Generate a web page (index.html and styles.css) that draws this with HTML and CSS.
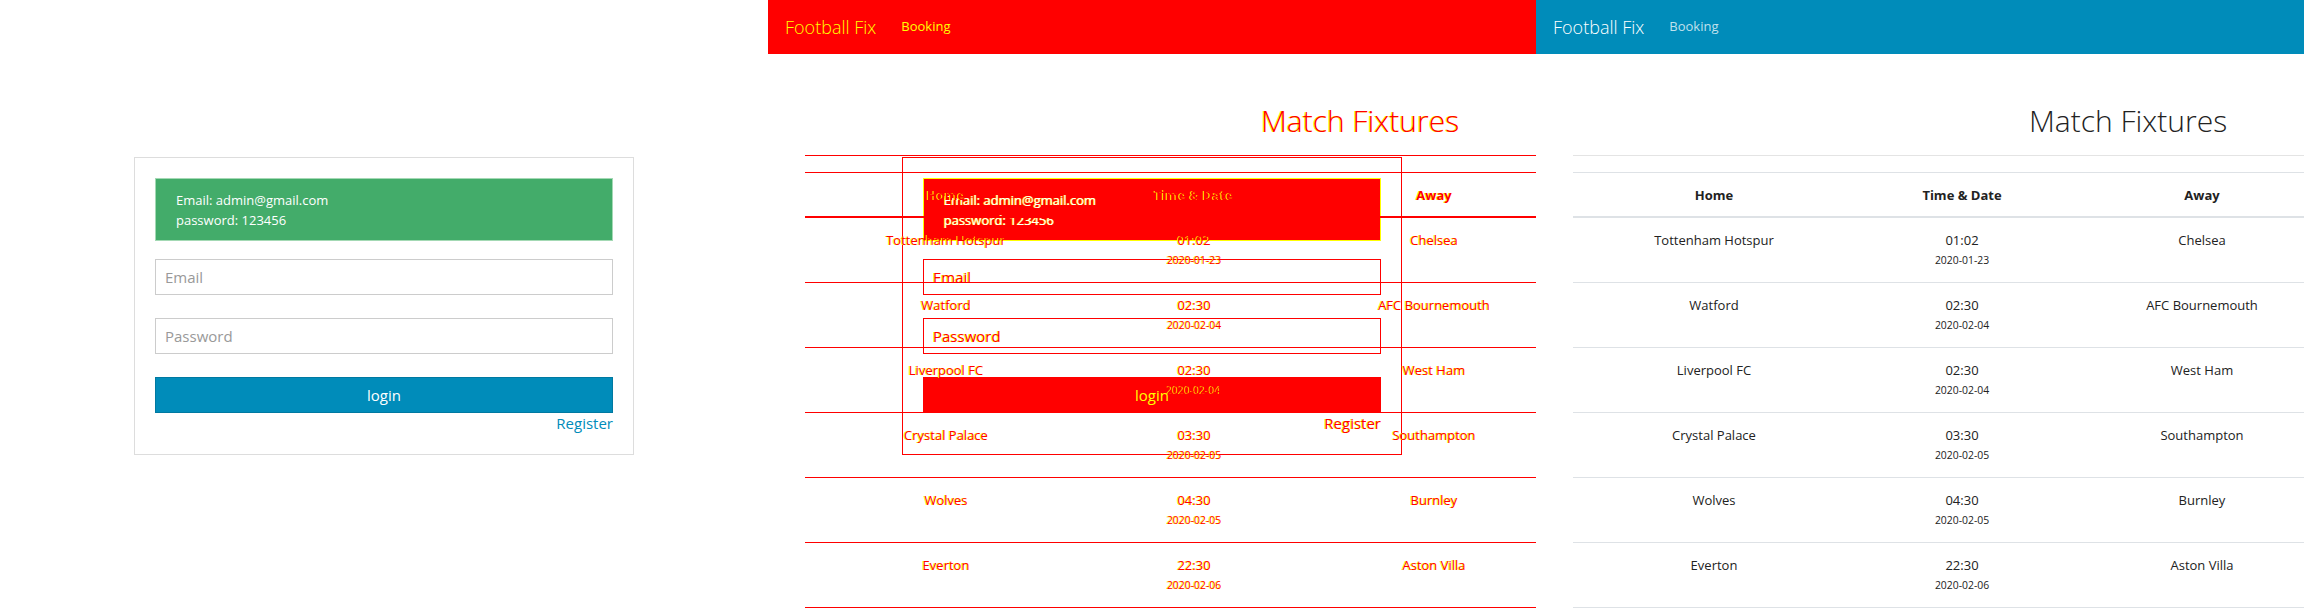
FILE: index.html
```html
<!DOCTYPE html>
<html lang="en">
<head>
<meta charset="utf-8">
<title>Football Fix</title>
<link rel="stylesheet" href="styles.css">
</head>
<body>
<div class="panels">

  <!-- Panel 1: login page -->
  <section class="panel">
    <div class="login-page">
      <form class="card">
        <div class="alert">Email: admin@gmail.com<br>password: 123456</div>
        <input class="field field-email" type="text" placeholder="Email">
        <input class="field field-pass" type="password" placeholder="Password">
        <button class="btn-login" type="button">login</button>
        <div class="register">Register</div>
      </form>
    </div>
  </section>

  <!-- Panel 2: difference overlay of both pages -->
  <section class="panel">
    <div class="layer diff">
      <div class="login-page">
        <form class="card">
          <div class="alert">Email: admin@gmail.com<br>password: 123456</div>
          <input class="field field-email" type="text" placeholder="Email">
          <input class="field field-pass" type="password" placeholder="Password">
          <button class="btn-login" type="button">login</button>
          <div class="register">Register</div>
        </form>
      </div>
    </div>
    <div class="layer diff">
      <nav class="navbar">
        <span class="brand">Football Fix</span>
        <span class="nav-link">Booking</span>
      </nav>
      <main class="container">
        <h1 class="title">Match Fixtures</h1>
        <hr class="rule">
        <table class="fixtures">
          <colgroup><col class="c-home"><col class="c-time"><col class="c-away"><col></colgroup>
          <thead><tr><th>Home</th><th>Time &amp; Date</th><th>Away</th><th></th></tr></thead>
          <tbody>
            <tr><td>Tottenham Hotspur</td><td>01:02<small class="date">2020-01-23</small></td><td>Chelsea</td><td></td></tr>
            <tr><td>Watford</td><td>02:30<small class="date">2020-02-04</small></td><td>AFC Bournemouth</td><td></td></tr>
            <tr><td>Liverpool FC</td><td>02:30<small class="date">2020-02-04</small></td><td>West Ham</td><td></td></tr>
            <tr><td>Crystal Palace</td><td>03:30<small class="date">2020-02-05</small></td><td>Southampton</td><td></td></tr>
            <tr><td>Wolves</td><td>04:30<small class="date">2020-02-05</small></td><td>Burnley</td><td></td></tr>
            <tr><td>Everton</td><td>22:30<small class="date">2020-02-06</small></td><td>Aston Villa</td><td></td></tr>
          </tbody>
        </table>
      </main>
    </div>
  </section>

  <!-- Panel 3: fixtures page -->
  <section class="panel">
    <nav class="navbar">
      <span class="brand">Football Fix</span>
      <span class="nav-link">Booking</span>
    </nav>
    <main class="container">
      <h1 class="title">Match Fixtures</h1>
      <hr class="rule">
      <table class="fixtures">
        <colgroup><col class="c-home"><col class="c-time"><col class="c-away"><col></colgroup>
        <thead><tr><th>Home</th><th>Time &amp; Date</th><th>Away</th><th></th></tr></thead>
        <tbody>
          <tr><td>Tottenham Hotspur</td><td>01:02<small class="date">2020-01-23</small></td><td>Chelsea</td><td></td></tr>
          <tr><td>Watford</td><td>02:30<small class="date">2020-02-04</small></td><td>AFC Bournemouth</td><td></td></tr>
          <tr><td>Liverpool FC</td><td>02:30<small class="date">2020-02-04</small></td><td>West Ham</td><td></td></tr>
          <tr><td>Crystal Palace</td><td>03:30<small class="date">2020-02-05</small></td><td>Southampton</td><td></td></tr>
          <tr><td>Wolves</td><td>04:30<small class="date">2020-02-05</small></td><td>Burnley</td><td></td></tr>
          <tr><td>Everton</td><td>22:30<small class="date">2020-02-06</small></td><td>Aston Villa</td><td></td></tr>
        </tbody>
      </table>
    </main>
  </section>

</div>
</body>
</html>
```

FILE: styles.css
```css
* { box-sizing: border-box; }

html, body { margin: 0; padding: 0; }

body {
  width: 2304px;
  height: 612px;
  overflow: hidden;
  background: #fff;
  color: #222;
  font-family: "Open Sans", "Liberation Sans", sans-serif;
}

.panels { display: flex; }

.panel {
  flex: none;
  width: 768px;
  height: 612px;
  overflow: hidden;
  position: relative;
}

.layer { position: absolute; inset: 0; }

/* ---------- Login page ---------- */
.login-page {
  height: 612px;
  display: flex;
  align-items: center;
  justify-content: center;
}

.card {
  width: 500px;
  margin: 0;
  border: 1px solid #ddd;
  padding: 20px;
  display: flex;
  flex-direction: column;
}

.alert {
  background: #43ac6a;
  border: 1px solid #a3d9b4;
  color: #fff;
  font-size: 13px;
  line-height: 20px;
  padding: 11px 20px 10px;
}

.field {
  display: block;
  width: 100%;
  height: 36px;
  margin: 0;
  border: 1px solid #ccc;
  border-radius: 0;
  padding: 0 9px;
  background: #fff;
  color: #222;
  font-family: "Open Sans", "Liberation Sans", sans-serif;
  font-size: 15px;
  outline: none;
}
.field::placeholder { color: #999; }
.field-email { margin-top: 18px; }
.field-pass { margin-top: 23px; }

.btn-login {
  display: block;
  width: 100%;
  height: 36px;
  margin: 23px 0 0;
  border: 1px solid #0079a1;
  border-radius: 0;
  background: #008cba;
  color: #fff;
  font-family: "Open Sans", "Liberation Sans", sans-serif;
  font-size: 15px;
  padding: 0;
}

.register {
  text-align: right;
  font-size: 15px;
  line-height: 21px;
  color: #008cba;
}

/* ---------- Fixtures page ---------- */
.navbar {
  height: 54px;
  background: #008cba;
  display: flex;
  align-items: center;
  padding-left: 17px;
}

.brand {
  font-size: 18px;
  font-weight: 300;
  line-height: 27px;
  color: #fff;
}

.nav-link {
  margin-left: 25px;
  font-size: 13px;
  line-height: 20px;
  padding-bottom: 2px;
  color: rgba(255, 255, 255, 0.75);
}

.container {
  width: 1140px;
  margin-left: 22px;
  padding: 0 15px;
}

.title {
  margin: 49px 0 0;
  font-size: 30px;
  font-weight: 300;
  line-height: 36px;
  text-align: center;
  color: #222;
}

.rule {
  margin: 16px 0;
  height: 0;
  border: 0;
  border-top: 1px solid #e4e4e4;
}

.fixtures {
  width: 100%;
  table-layout: fixed;
  border-spacing: 0;
  font-size: 13px;
  line-height: 20px;
  color: #222;
}

.c-home { width: 282px; }
.c-time { width: 214px; }
.c-away { width: 266px; }

.fixtures th {
  border-top: 1px solid #dee2e6;
  border-bottom: 2px solid #dee2e6;
  padding: 12px 12px 11px;
  font-weight: 700;
  text-align: center;
}

.fixtures td {
  border-bottom: 1px solid #dee2e6;
  padding: 12px;
  text-align: center;
  vertical-align: top;
}

.date {
  display: block;
  font-size: 10.4px;
  line-height: 20px;
}

/* ---------- Difference overlay ---------- */
.diff {
  color: #f00;
  text-shadow: -1px 0 #ff0;
}

.diff .login-page { background: transparent; }
.diff .card { border-color: #f00; }
.diff .alert {
  background: #f00;
  border-color: #ff0;
  color: #fff;
}
.diff .field {
  background: transparent;
  border-color: #f00;
}
.diff .field::placeholder {
  color: #f00;
  text-shadow: -1px 0 #ff0;
}
.diff .btn-login {
  background: #f00;
  border-color: #f00;
  color: #ff0;
  text-shadow: none;
}
.diff .register { color: #f00; }

.diff .navbar { background: #f00; }
.diff .brand,
.diff .nav-link {
  color: #ff0;
  text-shadow: none;
}
.diff .title { color: #f00; }
.diff .rule { border-top-color: #f00; }
.diff .fixtures { color: #f00; }
.diff .fixtures th { border-top-color: #f00; border-bottom-color: #f00; }
.diff .fixtures td { border-bottom-color: #f00; }
```
